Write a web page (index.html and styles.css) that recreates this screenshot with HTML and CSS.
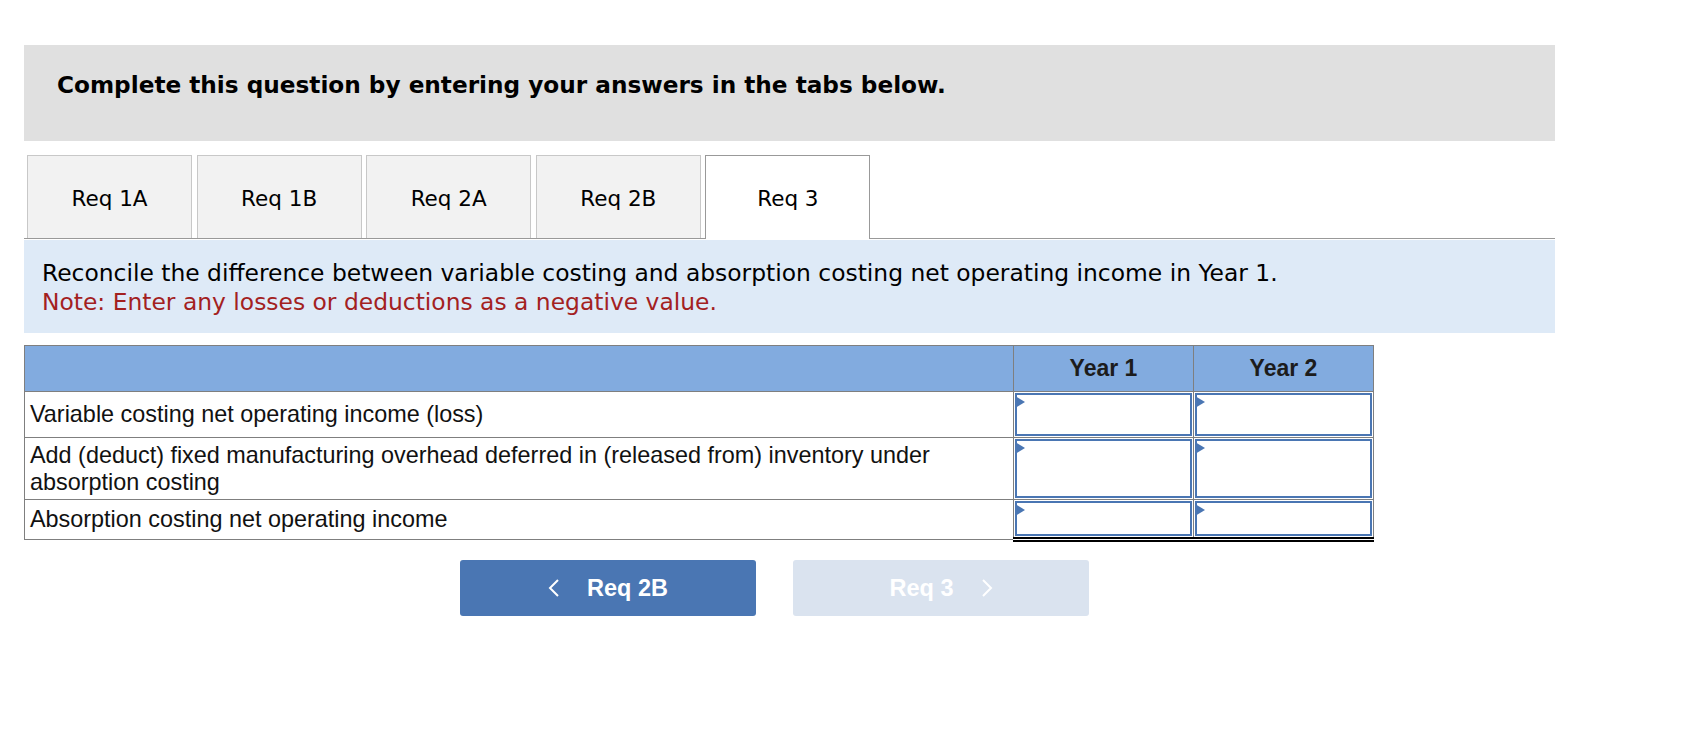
FILE: index.html
```html
<!DOCTYPE html>
<html lang="en">
<head>
<meta charset="utf-8">
<title>Req 3</title>
<link rel="stylesheet" href="styles.css">
</head>
<body>
<div class="page">
  <div class="prompt">
    <h2 class="prompt-title">Complete this question by entering your answers in the tabs below.</h2>
  </div>

  <div class="tabs">
    <div class="tab">Req 1A</div>
    <div class="tab">Req 1B</div>
    <div class="tab">Req 2A</div>
    <div class="tab">Req 2B</div>
    <div class="tab active">Req 3</div>
  </div>

  <div class="instructions">
    <p class="instr-text">Reconcile the difference between variable costing and absorption costing net operating income in Year 1.</p>
    <p class="instr-note">Note: Enter any losses or deductions as a negative value.</p>
  </div>

  <table class="grid">
    <thead>
      <tr class="head-row">
        <th class="label-col"></th>
        <th class="year-col">Year 1</th>
        <th class="year-col">Year 2</th>
      </tr>
    </thead>
    <tbody>
      <tr class="row-a">
        <td class="label">Variable costing net operating income (loss)</td>
        <td class="cell"><div class="input"><span class="flag"></span></div></td>
        <td class="cell"><div class="input"><span class="flag"></span></div></td>
      </tr>
      <tr class="row-b">
        <td class="label">Add (deduct) fixed manufacturing overhead deferred in (released from) inventory under<br>absorption costing</td>
        <td class="cell"><div class="input"><span class="flag"></span></div></td>
        <td class="cell"><div class="input"><span class="flag"></span></div></td>
      </tr>
      <tr class="row-c">
        <td class="label">Absorption costing net operating income</td>
        <td class="cell total"><div class="input"><span class="flag"></span></div></td>
        <td class="cell total"><div class="input"><span class="flag"></span></div></td>
      </tr>
    </tbody>
  </table>

  <div class="nav">
    <button class="btn btn-prev" type="button">
      <svg class="chev" width="12" height="20" viewBox="0 0 12 20"><path d="M10 2 L2 10 L10 18" fill="none" stroke="#ffffff" stroke-width="2"/></svg>
      <span>Req 2B</span>
    </button>
    <button class="btn btn-next" type="button" disabled>
      <span>Req 3</span>
      <svg class="chev" width="12" height="20" viewBox="0 0 12 20"><path d="M2 2 L10 10 L2 18" fill="none" stroke="#ffffff" stroke-width="2"/></svg>
    </button>
  </div>
</div>
</body>
</html>
```

FILE: styles.css
```css
* { box-sizing: border-box; }

body {
  margin: 0;
  background: #ffffff;
  color: #000000;
}

.page {
  padding: 45px 0 0 24px;
  width: 1555px;
}

.prompt {
  background: #e0e0e0;
  height: 96px;
  padding: 26px 0 0 33px;
}

.prompt-title {
  margin: 0;
  font-family: "DejaVu Sans", Verdana, sans-serif;
  font-weight: bold;
  font-size: 23.2px;
  line-height: 28px;
}

.tabs {
  display: flex;
  gap: 4.6px;
  margin-top: 14px;
  padding-left: 3px;
  height: 84px;
  border-bottom: 1px solid #999999;
}

.tab {
  width: 165px;
  height: 83px;
  background: #f2f2f2;
  border: 1px solid #c8c8c8;
  border-bottom: none;
  display: flex;
  align-items: center;
  justify-content: center;
  font-family: "DejaVu Sans", Verdana, sans-serif;
  font-size: 21.5px;
  padding-top: 2px;
}

.tab.active {
  background: #ffffff;
  border-color: #999999;
  height: 84px;
}

.instructions {
  margin-top: 1px;
  background: #deeaf7;
  height: 93px;
  padding: 19px 0 0 18px;
  font-family: "DejaVu Sans", Verdana, sans-serif;
  font-size: 23.4px;
  line-height: 29px;
}

.instr-text,
.instr-note {
  margin: 0;
}

.instr-note {
  color: #a3211f;
}

.grid {
  margin-top: 12px;
  width: 1350px;
  border-collapse: collapse;
  border: 1px solid #7f7f7f;
  font-family: "Liberation Sans", Arial, sans-serif;
}

.head-row th {
  background: #82abdf;
  height: 46px;
  border: 1px solid #7f7f7f;
  font-size: 23px;
  font-weight: bold;
  color: #1c1c1c;
  padding: 0;
}

.label-col { width: 989px; }
.year-col { width: 180px; }

.label {
  border: 1px solid #7f7f7f;
  font-size: 23.4px;
  line-height: 27px;
  padding: 0 0 0 5px;
  color: #111111;
  vertical-align: middle;
}

.cell {
  border: 1px solid #7f7f7f;
  padding: 1px;
}

.cell.total {
  border-bottom: 5px double #000000;
}

.input {
  position: relative;
  border: 2px solid #4a76b3;
  background: #ffffff;
}

.row-a .input { height: 43px; }
.row-b .input { height: 59px; }
.row-c .input { height: 35px; }

.flag {
  position: absolute;
  left: -2px;
  top: 1px;
  width: 0;
  height: 0;
  border-top: 6px solid transparent;
  border-bottom: 6px solid transparent;
  border-left: 10px solid #4a76b3;
}

.nav {
  display: flex;
  gap: 37px;
  margin: 18px 0 0 436px;
}

.btn {
  width: 296px;
  height: 56px;
  border: none;
  border-radius: 3px;
  display: flex;
  align-items: center;
  justify-content: center;
  gap: 27px;
  font-family: "Liberation Sans", Arial, sans-serif;
  font-weight: bold;
  font-size: 23.5px;
  color: #ffffff;
  padding: 0;
}

.btn-prev { background: #4a76b3; }
.btn-next { background: #dae3ef; }

.chev { display: block; }
```
